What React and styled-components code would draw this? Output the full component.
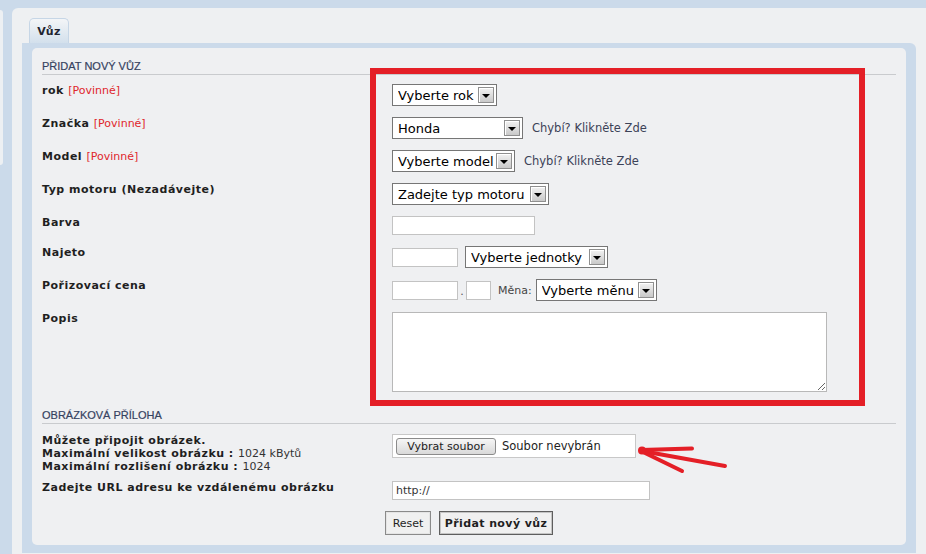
import React from "react";
import styled, { createGlobalStyle } from "styled-components";

const Global = createGlobalStyle`
  html, body {
    margin: 0;
    padding: 0;
    background: #cbdaea;
    overflow: hidden;
  }
  body {
    font-family: "DejaVu Sans", Verdana, sans-serif;
    font-size: 11px;
    color: #1f1f1f;
  }
`;

const Page = styled.div`
  display: flex;
  min-height: 554px;
`;

const Side = styled.div`
  flex: none;
  width: 12px;
`;

const SideCard = styled.div`
  width: 3px;
  height: 155px;
  margin-top: 10px;
  background: #edf0f3;
  border-radius: 0 3px 3px 0;
`;

const Panel = styled.div`
  flex: 1;
  margin-top: 8px;
  padding: 10px 10px 0 10px;
  background: #eef0f2;
  border-radius: 6px 0 0 0;
  display: flex;
  flex-direction: column;
`;

const Tab = styled.div`
  align-self: flex-start;
  margin-left: 7px;
  width: 40px;
  height: 25px;
  box-sizing: border-box;
  border: 1px solid #c6d6e6;
  border-bottom: none;
  border-radius: 5px 5px 0 0;
  background: linear-gradient(#f3f5f7, #d3e0ec);
  display: flex;
  align-items: center;
  justify-content: center;
  font: bold 11px "DejaVu Sans", Verdana, sans-serif;
  letter-spacing: 0.4px;
  color: #1f2430;
  padding-top: 1px;
`;

const Frame = styled.div`
  background: #cbdaea;
  padding: 5px 10px 8px 10px;
  border-radius: 0 6px 0 0;
`;

const Content = styled.div`
  position: relative;
  display: flow-root;
  background: #eff0f2;
  border-radius: 5px;
  padding: 0 10px 10px 10px;
`;

const SectionTitle = styled.div`
  margin: ${(p) => p.$top}px 0 ${(p) => p.$bottom}px 0;
  padding-bottom: 1px;
  border-bottom: 1px solid #c9cbce;
  font: 11px "Liberation Sans", Arial, sans-serif;
  line-height: 14px;
  color: #36425f;
  text-transform: uppercase;
  -webkit-text-stroke: 0.2px #36425f;
`;

const Row = styled.div`
  display: grid;
  grid-template-columns: 350px 1fr;
  align-items: start;
  margin-bottom: ${(p) => p.$gap ?? 11}px;
`;

const Label = styled.div`
  font: bold 11px "DejaVu Sans", Verdana, sans-serif;
  letter-spacing: 0.5px;
  line-height: ${(p) => p.$lh ?? 14}px;
  color: #1f1f1f;
`;

const Required = styled.span`
  font-weight: normal;
  letter-spacing: 0;
  color: #e0262c;
`;

const Plain = styled.span`
  font-weight: normal;
  letter-spacing: 0;
  color: #333;
`;

const Controls = styled.div`
  display: flex;
  align-items: center;
  gap: ${(p) => p.$gap ?? 9}px;
`;

const Select = styled.div`
  display: inline-flex;
  align-items: center;
  box-sizing: border-box;
  width: ${(p) => p.$w}px;
  height: 22px;
  padding: 0 2px 0 5px;
  border: 1px solid #767676;
  background: #fff;
  font: 13px "DejaVu Sans", Verdana, sans-serif;
  color: #000;
`;

const SelectText = styled.span`
  flex: 1;
  white-space: nowrap;
  overflow: hidden;
`;

const Arrow = styled.span`
  flex: none;
  width: 16px;
  height: 16px;
  box-sizing: border-box;
  border: 1px solid #8f8f8f;
  box-shadow: inset 1px 1px 0 #ffffff;
  background: linear-gradient(#f2f2f2, #c9c9c9);
  display: flex;
  align-items: center;
  justify-content: center;

  &::after {
    content: "";
    border-left: 4px solid transparent;
    border-right: 4px solid transparent;
    border-top: 4px solid #000;
    margin-top: 1px;
  }
`;

const Hint = styled.span`
  font: 11.5px "DejaVu Sans", Verdana, sans-serif;
  color: #3c4257;
`;

const Input = styled.input`
  box-sizing: border-box;
  width: ${(p) => p.$w}px;
  height: 19px;
  margin: 0;
  padding: 0 3px;
  border: 1px solid #c3c3c3;
  background: #fff;
  font: 11px "DejaVu Sans", Verdana, sans-serif;
  color: #333;
  outline: none;
`;

const Dot = styled.span`
  width: 8px;
  text-align: center;
  color: #555;
  font-size: 11px;
  line-height: 19px;
  align-self: flex-end;
`;

const SmallLabel = styled.span`
  margin: 0 4px 0 7px;
  font: 11px "DejaVu Sans", Verdana, sans-serif;
  color: #444;
`;

const TextArea = styled.textarea`
  display: block;
  box-sizing: border-box;
  width: 435px;
  height: 80px;
  margin: 0;
  border: 1px solid #b8b8b8;
  background: #fff;
  resize: both;
  outline: none;
`;

const FileBox = styled.div`
  box-sizing: border-box;
  width: 244px;
  height: 24px;
  padding: 0 3px;
  display: flex;
  align-items: center;
  gap: 6px;
  border: 1px solid #c8c8c8;
  background: #fff;
`;

const FileButton = styled.span`
  box-sizing: border-box;
  width: 100px;
  height: 17px;
  display: flex;
  align-items: center;
  justify-content: center;
  border: 1px solid #8b8b8b;
  border-radius: 3px;
  background: linear-gradient(#f6f6f6, #d9d9d9);
  font: 11px "DejaVu Sans", Verdana, sans-serif;
  color: #222;
`;

const FileStatus = styled.span`
  font: 11.5px "DejaVu Sans", Verdana, sans-serif;
  color: #222;
`;

const Actions = styled.div`
  display: flex;
  justify-content: center;
  gap: 8px;
`;

const Button = styled.button`
  box-sizing: border-box;
  width: ${(p) => p.$w}px;
  height: 24px;
  margin: 0;
  padding: 0;
  border: 1px solid ${(p) => (p.$primary ? "#5e5e5e" : "#8a8a8a")};
  box-shadow: inset 0 0 0 1px ${(p) => (p.$primary ? "#c4c4c4" : "#e4e4e4")};
  background: #f0f0f0;
  font: ${(p) => (p.$primary ? "bold" : "normal")} 11px "DejaVu Sans", Verdana, sans-serif;
  letter-spacing: ${(p) => (p.$primary ? 0.4 : 0)}px;
  color: #1f1f1f;
`;

/* hand-drawn annotation layered over the form */
const Marker = styled.div`
  position: absolute;
  left: 338px;
  top: 20px;
  width: 495px;
  height: 338px;
  box-sizing: border-box;
  border: 6px solid #e41f27;
  pointer-events: none;
`;

const Pointer = styled.svg`
  position: absolute;
  left: 604px;
  top: 390px;
  pointer-events: none;
`;

function Dropdown({ w, children }) {
  return (
    <Select $w={w}>
      <SelectText>{children}</SelectText>
      <Arrow />
    </Select>
  );
}

export default function App() {
  return (
    <>
      <Global />
      <Page>
        <Side>
          <SideCard />
        </Side>
        <Panel>
          <Tab>Vůz</Tab>
          <Frame>
            <Content>
              <SectionTitle $top={11} $bottom={9}>Přidat nový vůz</SectionTitle>

              <Row>
                <Label>
                  rok <Required>[Povinné]</Required>
                </Label>
                <Controls>
                  <Dropdown w={105}>Vyberte rok</Dropdown>
                </Controls>
              </Row>

              <Row>
                <Label>
                  Značka <Required>[Povinné]</Required>
                </Label>
                <Controls>
                  <Dropdown w={131}>Honda</Dropdown>
                  <Hint>Chybí? Klikněte Zde</Hint>
                </Controls>
              </Row>

              <Row>
                <Label>
                  Model <Required>[Povinné]</Required>
                </Label>
                <Controls>
                  <Dropdown w={123}>Vyberte model</Dropdown>
                  <Hint>Chybí? Klikněte Zde</Hint>
                </Controls>
              </Row>

              <Row>
                <Label>Typ motoru (Nezadávejte)</Label>
                <Controls>
                  <Dropdown w={157}>Zadejte typ motoru</Dropdown>
                </Controls>
              </Row>

              <Row>
                <Label>Barva</Label>
                <Controls>
                  <Input $w={143} />
                </Controls>
              </Row>

              <Row>
                <Label>Najeto</Label>
                <Controls $gap={7}>
                  <Input $w={66} />
                  <Dropdown w={143}>Vyberte jednotky</Dropdown>
                </Controls>
              </Row>

              <Row>
                <Label>Pořizovací cena</Label>
                <Controls $gap={0}>
                  <Input $w={66} />
                  <Dot>.</Dot>
                  <Input $w={25} />
                  <SmallLabel>Měna:</SmallLabel>
                  <Dropdown w={121}>Vyberte měnu</Dropdown>
                </Controls>
              </Row>

              <Row>
                <Label>Popis</Label>
                <Controls>
                  <TextArea />
                </Controls>
              </Row>

              <SectionTitle $top={16} $bottom={10}>Obrázková příloha</SectionTitle>

              <Row $gap={8}>
                <Label $lh={13}>
                  Můžete připojit obrázek.
                  <br />
                  Maximální velikost obrázku : <Plain>1024 kBytů</Plain>
                  <br />
                  Maximální rozlišení obrázku : <Plain>1024</Plain>
                </Label>
                <Controls>
                  <FileBox>
                    <FileButton>Vybrat soubor</FileButton>
                    <FileStatus>Soubor nevybrán</FileStatus>
                  </FileBox>
                </Controls>
              </Row>

              <Row>
                <Label>Zadejte URL adresu ke vzdálenému obrázku</Label>
                <Controls>
                  <Input $w={258} defaultValue="http://" />
                </Controls>
              </Row>

              <Actions>
                <Button $w={46}>Reset</Button>
                <Button $w={114} $primary>
                  Přidat nový vůz
                </Button>
              </Actions>

              <Marker />
              <Pointer width="96" height="38" viewBox="0 0 96 38">
                <g stroke="#e41f27" strokeWidth="4" strokeLinecap="round" fill="none">
                  <path d="M5 12 L56 10.5" />
                  <path d="M6 13 L89 28" />
                  <path d="M7 14 L46 33" />
                </g>
                <circle cx="6" cy="12.5" r="4" fill="#e41f27" />
              </Pointer>
            </Content>
          </Frame>
        </Panel>
      </Page>
    </>
  );
}
